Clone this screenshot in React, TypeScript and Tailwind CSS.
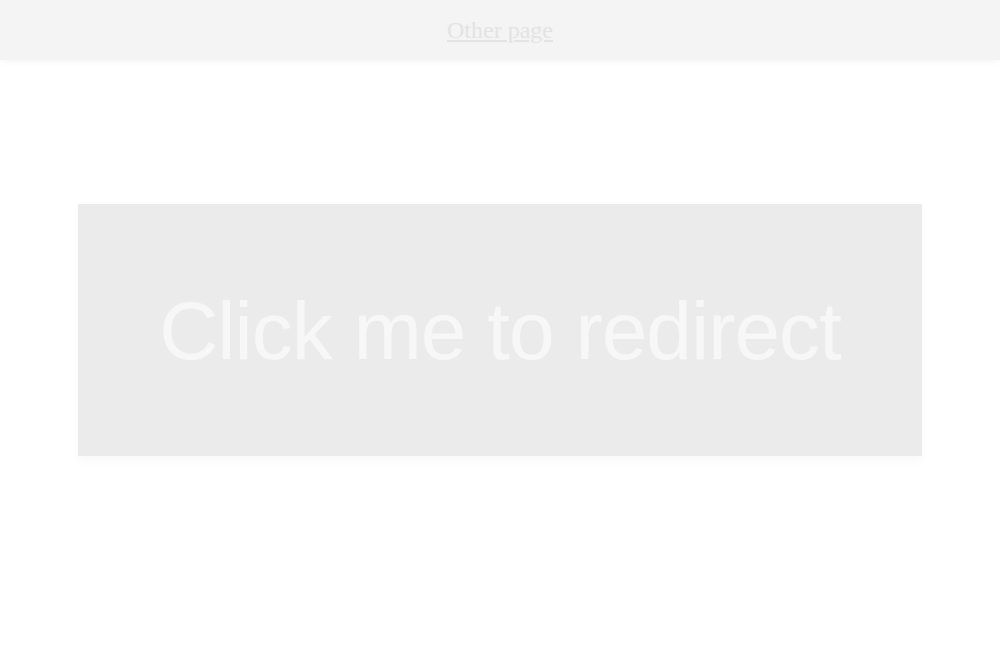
export default function App() {
  return (
    <div className="min-h-screen bg-white">
      <header className="flex h-[60px] items-center justify-center bg-[#f4f4f4] shadow-[0_2px_6px_rgba(0,0,0,0.04)]">
        <a
          href="#"
          className="text-[24px] text-[#e3e3e3] underline [font-family:'Liberation_Serif',serif]"
        >
          Other page
        </a>
      </header>
      <div className="mx-[78px] mt-[144px]">
        <button
          type="button"
          className="flex h-[252px] w-full items-center justify-center bg-[#ebebeb] text-[82px] tracking-[-1px] text-[#f7f7f7] shadow-[0_6px_8px_rgba(0,0,0,0.025)] [font-family:'Liberation_Sans',sans-serif]"
        >
          Click me to redirect
        </button>
      </div>
    </div>
  );
}
